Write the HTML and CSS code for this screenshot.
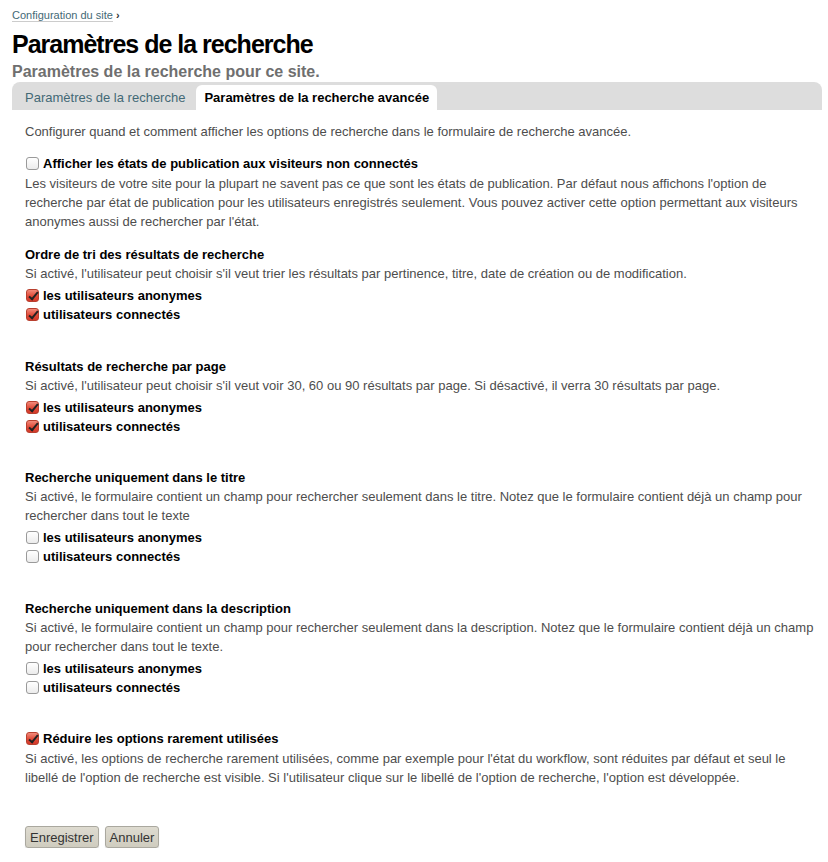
FILE: index.html
```html
<!DOCTYPE html>
<html lang="fr">
<head>
<meta charset="utf-8">
<title>Paramètres de la recherche</title>
<link rel="stylesheet" href="styles.css">
</head>
<body>
<div class="page">
  <nav class="breadcrumbs"><a href="#">Configuration du site</a> <span class="sep">›</span></nav>
  <h1 class="title">Paramètres de la recherche</h1>
  <p class="subtitle">Paramètres de la recherche pour ce site.</p>
  <div class="tabs">
    <a class="tab" href="#">Paramètres de la recherche</a>
    <span class="tab active">Paramètres de la recherche avancée</span>
  </div>
  <form class="content">
    <p class="intro">Configurer quand et comment afficher les options de recherche dans le formulaire de recherche avancée.</p>

    <div class="field first">
      <label class="cb"><input type="checkbox"> Afficher les états de publication aux visiteurs non connectés</label>
      <div class="help">Les visiteurs de votre site pour la plupart ne savent pas ce que sont les états de publication. Par défaut nous affichons l'option de recherche par état de publication pour les utilisateurs enregistrés seulement. Vous pouvez activer cette option permettant aux visiteurs anonymes aussi de rechercher par l'état.</div>
    </div>

    <div class="field">
      <div class="label">Ordre de tri des résultats de recherche</div>
      <div class="help">Si activé, l'utilisateur peut choisir s'il veut trier les résultats par pertinence, titre, date de création ou de modification.</div>
      <label class="cb"><input type="checkbox" checked> les utilisateurs anonymes</label>
      <label class="cb"><input type="checkbox" checked> utilisateurs connectés</label>
    </div>

    <div class="field">
      <div class="label">Résultats de recherche par page</div>
      <div class="help">Si activé, l'utilisateur peut choisir s'il veut voir 30, 60 ou 90 résultats par page. Si désactivé, il verra 30 résultats par page.</div>
      <label class="cb"><input type="checkbox" checked> les utilisateurs anonymes</label>
      <label class="cb"><input type="checkbox" checked> utilisateurs connectés</label>
    </div>

    <div class="field">
      <div class="label">Recherche uniquement dans le titre</div>
      <div class="help">Si activé, le formulaire contient un champ pour rechercher seulement dans le titre. Notez que le formulaire contient déjà un champ pour rechercher dans tout le texte</div>
      <label class="cb"><input type="checkbox"> les utilisateurs anonymes</label>
      <label class="cb"><input type="checkbox"> utilisateurs connectés</label>
    </div>

    <div class="field">
      <div class="label">Recherche uniquement dans la description</div>
      <div class="help">Si activé, le formulaire contient un champ pour rechercher seulement dans la description. Notez que le formulaire contient déjà un champ pour rechercher dans tout le texte.</div>
      <label class="cb"><input type="checkbox"> les utilisateurs anonymes</label>
      <label class="cb"><input type="checkbox"> utilisateurs connectés</label>
    </div>

    <div class="field last">
      <label class="cb"><input type="checkbox" checked> Réduire les options rarement utilisées</label>
      <div class="help">Si activé, les options de recherche rarement utilisées, comme par exemple pour l'état du workflow, sont réduites par défaut et seul le libellé de l'option de recherche est visible. Si l'utilisateur clique sur le libellé de l'option de recherche, l'option est développée.</div>
    </div>

    <div class="buttons">
      <button type="button" class="btn">Enregistrer</button>
      <button type="button" class="btn">Annuler</button>
    </div>
  </form>
</div>
</body>
</html>
```
FILE: styles.css
```css
html, body {
  margin: 0;
  padding: 0;
  background: #fff;
}
body {
  font-family: "Liberation Sans", Arial, sans-serif;
  color: #4d4d4d;
}
.page {
  padding: 8px 6px 0 12px;
}
.breadcrumbs {
  font-size: 11px;
  line-height: 14px;
  color: #333;
}
.breadcrumbs a {
  color: #436976;
  text-decoration: none;
  border-bottom: 1px solid #ccc;
}
.breadcrumbs .sep {
  font-weight: bold;
  color: #333;
}
.title {
  margin: 7px 0 0;
  font-size: 25px;
  line-height: 30px;
  letter-spacing: -1px;
  color: #000;
  font-weight: bold;
}
.subtitle {
  margin: 3px 0 0;
  font-size: 16px;
  line-height: 20px;
  font-weight: bold;
  color: #6f6f6f;
}
.tabs {
  background: #ddd;
  border-radius: 8px 8px 0 0;
  height: 28px;
  display: flex;
  align-items: flex-end;
  padding-left: 13px;
}
.tab {
  font-size: 13px;
  line-height: 25px;
  height: 25px;
  padding: 0 11px 0 0;
  color: #436976;
  text-decoration: none;
}
.tab.active {
  background: #fff;
  color: #000;
  font-weight: bold;
  border-radius: 6px 6px 0 0;
  padding: 0 8px;
}
.content {
  padding: 12px 0 0 13px;
  font-size: 13px;
  line-height: 19px;
}
.intro {
  margin: 0 0 13px;
}
.field {
  margin-bottom: 32.5px;
}
.field.first {
  margin-bottom: 14px;
}
.label {
  font-weight: bold;
  color: #000;
}
.help {
  color: #4d4d4d;
}
.help + .cb {
  margin-top: 3px;
}
.cb + .help {
  margin-top: 1px;
}
.cb {
  display: flex;
  align-items: center;
  font-weight: bold;
  color: #000;
  height: 19px;
}
.cb input {
  -webkit-appearance: none;
  appearance: none;
  position: relative;
  margin: 0 4px 0 1px;
  width: 13px;
  height: 13px;
  border: 1px solid #9a9a9a;
  border-radius: 3px;
  background: linear-gradient(#ffffff, #ececec);
  flex: none;
}
.cb input:checked {
  border-color: #b8402f;
  background: linear-gradient(#f28a7a, #e04a38 55%, #d43a2a);
}
.cb input:checked::after {
  content: "";
  position: absolute;
  left: 4px;
  top: 0px;
  width: 3px;
  height: 8px;
  border: solid #222;
  border-width: 0 2px 2px 0;
  transform: rotate(40deg);
}
.field.last {
  margin-bottom: 39px;
}
.buttons {
  display: flex;
  gap: 6px;
}
.btn {
  font-family: "Liberation Sans", Arial, sans-serif;
  font-size: 13px;
  color: #333;
  background: linear-gradient(#dedbd0, #cfccbf);
  border: 1px solid #aaa89f;
  border-radius: 3px;
  padding: 2px 4px;
  height: 22px;
  box-shadow: 0 1px 1px rgba(0,0,0,0.15);
}
```
